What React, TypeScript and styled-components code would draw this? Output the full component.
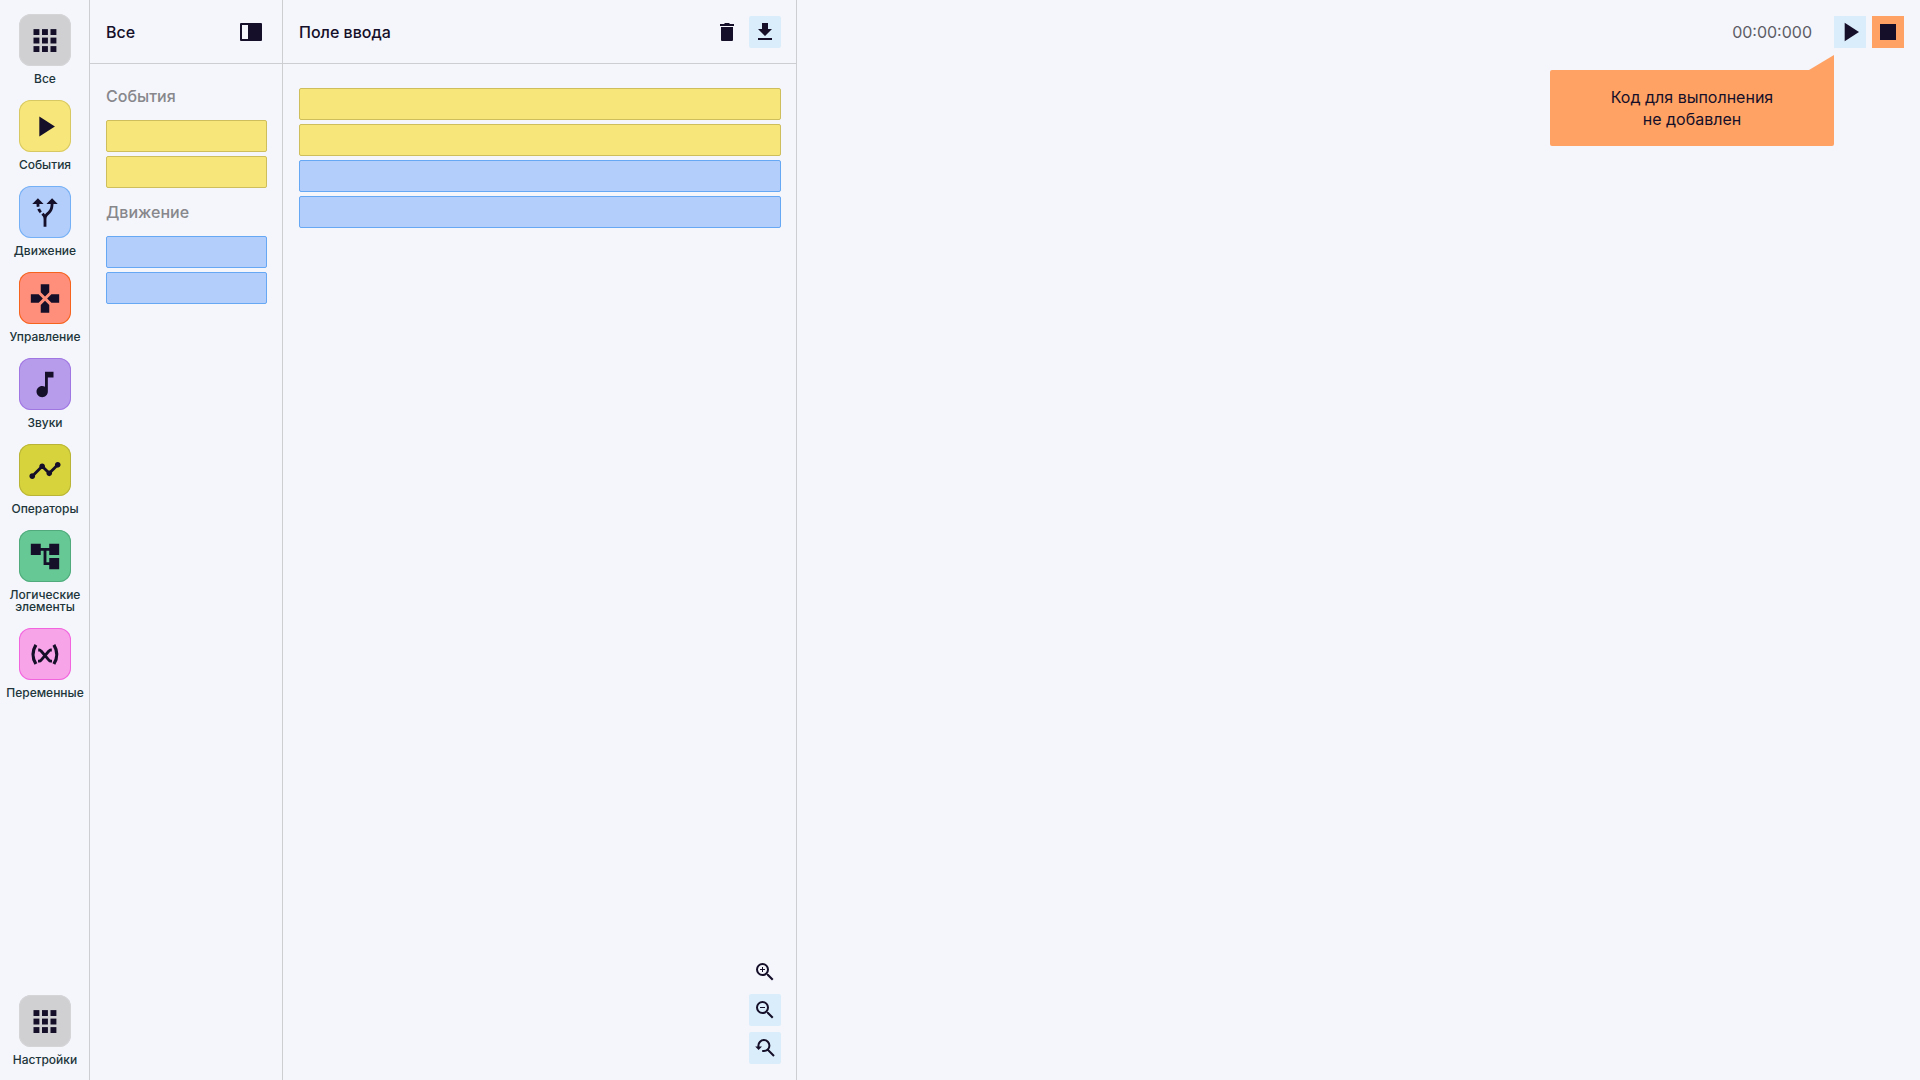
import React from "react";
import styled, { createGlobalStyle } from "styled-components";

const color = {
  page: "#f4f6fb",
  ink: "#150f29",
  label: "#20343a",
  muted: "#87878c",
  timer: "#5d5d66",
  line: "#cdced2",
  soft: "#daedfb",
  alert: "#ffa264",
};

const GlobalStyle = createGlobalStyle`
  * { box-sizing: border-box; }
  body {
    margin: 0;
    background: ${color.page};
    color: ${color.ink};
    font-family: Inter, "Open Sans", "Noto Sans", sans-serif;
    font-size: 16px;
  }
  button { font: inherit; color: inherit; cursor: pointer; }
`;

const Layout = styled.div`
  display: grid;
  grid-template-columns: 90px 193px 514px minmax(0, 1fr);
  min-height: 100vh;
`;

const Sidebar = styled.nav`
  display: flex;
  flex-direction: column;
  justify-content: space-between;
  padding: 14px 0;
  box-shadow: inset -1px 0 ${color.line};
`;

const Categories = styled.div`
  display: flex;
  flex-direction: column;
  gap: 15px;
`;

const CategoryButton = styled.button`
  display: flex;
  flex-direction: column;
  align-items: center;
  gap: 7px;
  width: 100%;
  padding: 0;
  border: 0;
  background: none;
  color: ${color.label};
  font-size: 12px;
  font-weight: 500;
  line-height: 12px;
`;

const Tile = styled.span<{ $fill: string; $edge: string }>`
  display: grid;
  place-items: center;
  width: 52px;
  height: 52px;
  border-radius: 12px;
  background: ${(p) => p.$fill};
  box-shadow: inset 0 0 0 1px ${(p) => p.$edge};
  color: ${color.ink};
`;

const Panel = styled.section`
  display: flex;
  flex-direction: column;
  box-shadow: inset -1px 0 ${color.line};
`;

const PanelHeader = styled.header`
  display: flex;
  align-items: center;
  gap: 6px;
  height: 64px;
  padding: 0 16px;
  border-bottom: 1px solid ${color.line};
`;

const Title = styled.h1`
  flex: 1;
  margin: 0;
  font-size: 16px;
  font-weight: 500;
  line-height: 22px;
`;

const PanelBody = styled.div`
  display: flex;
  flex: 1;
  flex-direction: column;
  gap: 16px;
  padding: 24px 16px 16px;
`;

const GroupTitle = styled.h2`
  margin: 0;
  color: ${color.muted};
  font-size: 16px;
  font-weight: 500;
  line-height: 16px;
`;

const BlockList = styled.div`
  display: flex;
  flex-direction: column;
  gap: 4px;
`;

const Block = styled.div<{ $fill: string; $edge: string }>`
  height: 32px;
  border: 1px solid ${(p) => p.$edge};
  border-radius: 2px;
  background: ${(p) => p.$fill};
`;

const IconButton = styled.button<{ $bg?: string; $square?: boolean }>`
  display: grid;
  place-items: center;
  width: 32px;
  height: 32px;
  padding: 0;
  border: 0;
  border-radius: ${(p) => (p.$square ? "0" : "2px")};
  background: ${(p) => p.$bg ?? "transparent"};
`;

const ZoomControls = styled.div`
  display: flex;
  flex-direction: column;
  align-items: flex-end;
  gap: 6px;
  margin-top: auto;
`;

const Stage = styled.main`
  padding: 16px;
`;

const Player = styled.div`
  position: relative;
  display: flex;
  align-items: center;
  justify-content: flex-end;
  gap: 6px;
`;

const Timer = styled.time`
  margin-right: 16px;
  color: ${color.timer};
  line-height: 22px;
`;

const Hint = styled.div`
  position: absolute;
  top: 54px;
  right: 70px;
  width: 284px;
  padding: 16px;
  border-radius: 2px 0 2px 2px;
  background: ${color.alert};
  line-height: 22px;
  text-align: center;

  &::before {
    content: "";
    position: absolute;
    right: 0;
    bottom: 100%;
    width: 25px;
    height: 15px;
    background: ${color.alert};
    clip-path: polygon(100% 0, 100% 100%, 0 100%);
  }
`;

const Glyph = ({ d, size = 24 }: { d: string; size?: number }) => (
  <svg width={size} height={size} viewBox="0 0 24 24" fill="currentColor" fillRule="evenodd" aria-hidden="true">
    <path d={d} />
  </svg>
);

const TileGlyph = ({ d }: { d: string }) => (
  <svg width="52" height="52" viewBox="0 0 52 52" fill="currentColor" aria-hidden="true">
    <path transform="translate(9 9.5) scale(1.417)" d={d} />
  </svg>
);

const GridGlyph = () => (
  <svg width="52" height="52" viewBox="0 0 52 52" fill="currentColor" aria-hidden="true">
    {[15.1, 23.6, 32.1].map((y) =>
      [14.5, 23, 31.5].map((x) => <rect key={`${x}-${y}`} x={x} y={y} width="5.9" height="5.9" />)
    )}
  </svg>
);

const VariableGlyph = () => (
  <svg width="52" height="52" viewBox="0 0 52 52" fill="none" stroke="currentColor" aria-hidden="true">
    <path strokeWidth="3.2" d="M16.9 16.8Q11.1 26.4 16.9 36M34.9 16.8Q40.7 26.4 34.9 36" />
    <path strokeWidth="2.8" d="M19.2 22H20.2Q21.3 22 22.1 23L29.9 32.2Q30.7 33.2 31.8 33.2H33" />
    <path strokeWidth="2.8" d="M32.8 22H31.8Q30.7 22 29.9 23L22.1 32.2Q21.3 33.2 20.2 33.2H19" />
  </svg>
);

const ResetZoomGlyph = () => (
  <svg width="24" height="24" viewBox="0 0 24 24" fill="none" stroke="currentColor" strokeWidth="2" aria-hidden="true">
    <path d="M5.4 11.4V9.6A5.5 5.5 0 1 1 10.8 15.1H9.2M14.8 13.8L21 20" />
    <path d="M2.2 10.4H9L5.6 14z" fill="currentColor" stroke="none" />
  </svg>
);

const path = {
  play: "M8 5v14l11-7z",
  route:
    "M9.78 11.16l-1.42 1.42a7.282 7.282 0 0 1-1.79-2.94l1.94-.49c.32.89.77 1.5 1.27 2.01zM11 6L7 2 3 6h3.02c.02.81.08 1.54.19 2.17l1.94-.49C8.08 7.2 8.03 6.63 8.02 6H11zm10 0l-4-4-4 4h2.99c-.1 3.68-1.28 4.75-2.54 5.88-.5.44-1.01.92-1.45 1.55-.34-.49-.73-.88-1.13-1.24L9.46 13.6c.93.85 1.54 1.54 1.54 3.4v5h2v-5c0-2.02.71-2.66 1.79-3.63 1.38-1.24 3.08-2.78 3.2-7.37H21z",
  gamepad:
    "M15 7.5V2H9v5.5l3 3 3-3zM7.5 9H2v6h5.5l3-3-3-3zM9 16.5V22h6v-5.5l-3-3-3 3zM16.5 9l-3 3 3 3H22V9h-5.5z",
  note: "M12 3v10.55c-.59-.34-1.27-.55-2-.55-2.21 0-4 1.79-4 4s1.79 4 4 4 4-1.79 4-4V7h4V3h-6z",
  timeline:
    "M23 8c0 1.1-.9 2-2 2-.18 0-.35-.02-.51-.07l-3.56 3.55c.05.16.07.34.07.52 0 1.1-.9 2-2 2s-2-.9-2-2c0-.18.02-.36.07-.52l-2.55-2.55c-.16.05-.34.07-.52.07s-.36-.02-.52-.07l-4.55 4.56c.05.16.07.33.07.51 0 1.1-.9 2-2 2s-2-.9-2-2 .9-2 2-2c.18 0 .35.02.51.07l4.56-4.55C8.02 9.36 8 9.18 8 9c0-1.1.9-2 2-2s2 .9 2 2c0 .18-.02.36-.07.52l2.55 2.55c.16-.05.34-.07.52-.07s.36.02.52.07l3.55-3.56C19.02 8.35 19 8.18 19 8c0-1.1.9-2 2-2s2 .9 2 2z",
  tree: "M22 11V3h-7v3H9V3H2v8h7V8h2v10h4v3h7v-8h-7v3h-2V8h2v3h7z",
  split: "M2 3H22Q23 3 23 4V20Q23 21 22 21H2Q1 21 1 20V4Q1 3 2 3ZM3 5V19H9V5Z",
  trash: "M6 7V20Q6 21 7 21H17Q18 21 18 20V7ZM5 4H9L10 3H14L15 4H19V6H5Z",
  download: "M19 9h-4V3H9v6H5l7 7zM5 18v2h14v-2z",
  lens:
    "M15.5 14h-.79l-.28-.27A6.471 6.471 0 0 0 16 9.5 6.5 6.5 0 1 0 9.5 16c1.61 0 3.09-.59 4.23-1.57l.27.28v.79l5 4.99L20.49 19l-4.99-5zm-6 0C7.01 14 5 11.99 5 9.5S7.01 5 9.5 5 14 7.01 14 9.5 11.99 14 9.5 14z",
  run: "M6.7 2.7V21.3L21 12Z",
  stop: "M4 4H20V20H4Z",
};

const blocks = {
  event: { fill: "#f7e77a", edge: "#cfbe5c" },
  motion: { fill: "#b3cefb", edge: "#66a8f4" },
};

const categories = [
  { label: "Все", fill: "#d0d0d3", edge: "#d5d5d8", icon: <GridGlyph /> },
  { label: "События", fill: "#f7e77a", edge: "#d8c863", icon: <TileGlyph d={path.play} /> },
  { label: "Движение", fill: "#b3cefb", edge: "#74b0f5", icon: <TileGlyph d={path.route} /> },
  { label: "Управление", fill: "#ff8f7a", edge: "#f5631d", icon: <TileGlyph d={path.gamepad} /> },
  { label: "Звуки", fill: "#b89cec", edge: "#a077e2", icon: <TileGlyph d={path.note} /> },
  { label: "Операторы", fill: "#d6d33d", edge: "#b9b437", icon: <TileGlyph d={path.timeline} /> },
  { label: "Логические элементы", fill: "#66c894", edge: "#50aa7c", icon: <TileGlyph d={path.tree} /> },
  { label: "Переменные", fill: "#f7a4e8", edge: "#f263de", icon: <VariableGlyph /> },
];

const palette = [
  { title: "События", kind: blocks.event },
  { title: "Движение", kind: blocks.motion },
];

const program = [blocks.event, blocks.event, blocks.motion, blocks.motion];

const Category = ({ label, fill, edge, icon }: (typeof categories)[number]) => (
  <CategoryButton type="button">
    <Tile $fill={fill} $edge={edge}>
      {icon}
    </Tile>
    {label}
  </CategoryButton>
);

export default function App() {
  return (
    <>
      <GlobalStyle />
      <Layout>
        <Sidebar>
          <Categories>
            {categories.map((c) => (
              <Category key={c.label} {...c} />
            ))}
          </Categories>
          <Category {...categories[0]} label="Настройки" />
        </Sidebar>

        <Panel>
          <PanelHeader>
            <Title>Все</Title>
            <IconButton type="button" aria-label="Свернуть панель">
              <Glyph d={path.split} />
            </IconButton>
          </PanelHeader>
          <PanelBody>
            {palette.map(({ title, kind }) => (
              <React.Fragment key={title}>
                <GroupTitle>{title}</GroupTitle>
                <BlockList>
                  <Block $fill={kind.fill} $edge={kind.edge} />
                  <Block $fill={kind.fill} $edge={kind.edge} />
                </BlockList>
              </React.Fragment>
            ))}
          </PanelBody>
        </Panel>

        <Panel>
          <PanelHeader>
            <Title as="h2">Поле ввода</Title>
            <IconButton type="button" aria-label="Удалить">
              <Glyph d={path.trash} />
            </IconButton>
            <IconButton type="button" aria-label="Скачать" $bg={color.soft}>
              <Glyph d={path.download} />
            </IconButton>
          </PanelHeader>
          <PanelBody>
            <BlockList>
              {program.map((b, i) => (
                <Block key={i} $fill={b.fill} $edge={b.edge} />
              ))}
            </BlockList>
            <ZoomControls>
              <IconButton type="button" aria-label="Увеличить">
                <Glyph d={path.lens + "M9 7H10V9H12V10H10V12H9V10H7V9H9Z"} />
              </IconButton>
              <IconButton type="button" aria-label="Уменьшить" $bg={color.soft}>
                <Glyph d={path.lens + "M7 9H12V10H7Z"} />
              </IconButton>
              <IconButton type="button" aria-label="Сбросить масштаб" $bg={color.soft}>
                <ResetZoomGlyph />
              </IconButton>
            </ZoomControls>
          </PanelBody>
        </Panel>

        <Stage>
          <Player>
            <Timer>00:00:000</Timer>
            <IconButton type="button" aria-label="Запустить" $bg={color.soft} $square>
              <Glyph d={path.run} />
            </IconButton>
            <IconButton type="button" aria-label="Остановить" $bg={color.alert} $square>
              <Glyph d={path.stop} />
            </IconButton>
            <Hint role="status">
              Код для выполнения
              <br />
              не добавлен
            </Hint>
          </Player>
        </Stage>
      </Layout>
    </>
  );
}
